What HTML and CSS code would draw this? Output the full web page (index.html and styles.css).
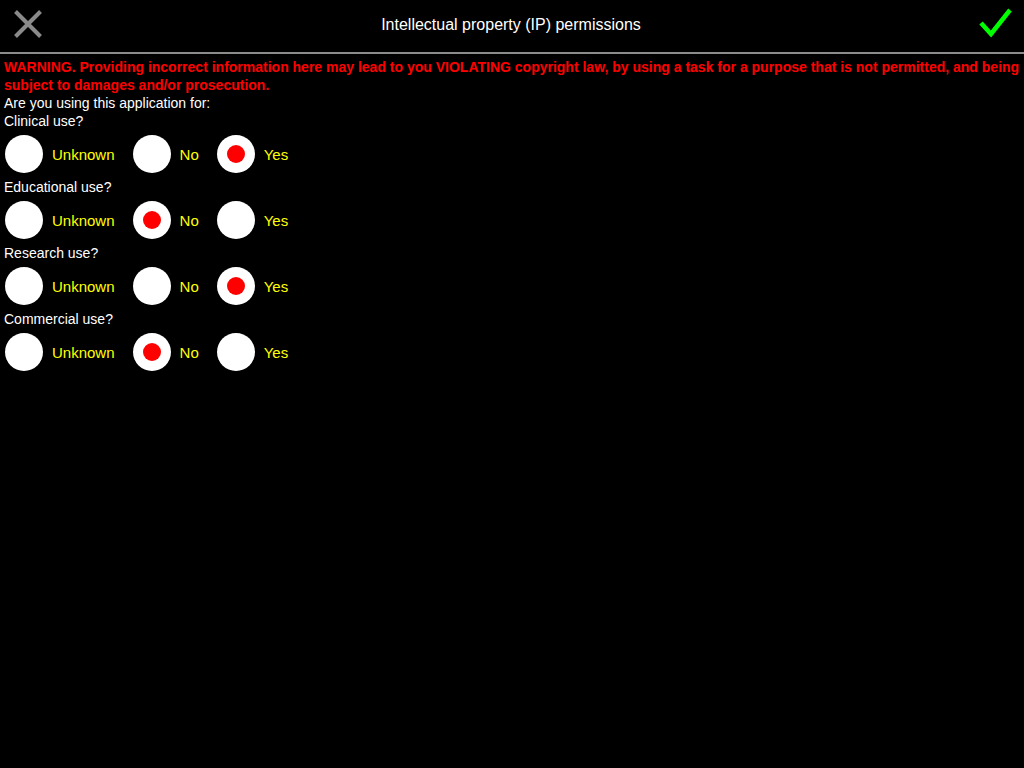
FILE: index.html
```html
<!DOCTYPE html>
<html>
<head>
<meta charset="utf-8">
<link rel="stylesheet" href="styles.css">
</head>
<body>
<header class="topbar">
  <button class="icon-btn cancel" aria-label="Cancel">
    <svg width="28" height="28" viewBox="0 0 28 28"><path d="M1.5 1.5 L26.5 26.5 M26.5 1.5 L1.5 26.5" stroke="#8a8a8a" stroke-width="4" fill="none"/></svg>
  </button>
  <div class="title">Intellectual property (IP) permissions</div>
  <button class="icon-btn ok" aria-label="OK">
    <svg width="36" height="32" viewBox="0 0 36 32"><path d="M3 15 L13 26 L32 2" stroke="#00ff00" stroke-width="4.5" fill="none" stroke-linejoin="miter"/></svg>
  </button>
</header>
<main class="content">
  <p class="warning">WARNING. Providing incorrect information here may lead to you VIOLATING copyright law, by using a task for a purpose that is not permitted, and being subject to damages and/or prosecution.</p>
  <p class="text">Are you using this application for:</p>

  <p class="text">Clinical use?</p>
  <div class="options">
    <div class="opt"><span class="radio"></span><span class="lbl">Unknown</span></div>
    <div class="opt"><span class="radio"></span><span class="lbl">No</span></div>
    <div class="opt"><span class="radio on"></span><span class="lbl">Yes</span></div>
  </div>

  <p class="text">Educational use?</p>
  <div class="options">
    <div class="opt"><span class="radio"></span><span class="lbl">Unknown</span></div>
    <div class="opt"><span class="radio on"></span><span class="lbl">No</span></div>
    <div class="opt"><span class="radio"></span><span class="lbl">Yes</span></div>
  </div>

  <p class="text">Research use?</p>
  <div class="options">
    <div class="opt"><span class="radio"></span><span class="lbl">Unknown</span></div>
    <div class="opt"><span class="radio"></span><span class="lbl">No</span></div>
    <div class="opt"><span class="radio on"></span><span class="lbl">Yes</span></div>
  </div>

  <p class="text">Commercial use?</p>
  <div class="options">
    <div class="opt"><span class="radio"></span><span class="lbl">Unknown</span></div>
    <div class="opt"><span class="radio on"></span><span class="lbl">No</span></div>
    <div class="opt"><span class="radio"></span><span class="lbl">Yes</span></div>
  </div>
</main>
</body>
</html>
```
FILE: styles.css
```css
html, body {
  margin: 0;
  padding: 0;
  background: #000;
  font-family: "Liberation Sans", Arial, sans-serif;
  color: #fff;
}
.topbar {
  height: 52px;
  border-bottom: 2px solid #8c8c8c;
  display: flex;
  align-items: center;
  justify-content: space-between;
  padding: 0 10px 0 14px;
}
.icon-btn {
  background: none;
  border: 0;
  padding: 0;
  display: flex;
  cursor: pointer;
}
.icon-btn.cancel { margin-top: -5px; }
.icon-btn.ok { margin-top: -4px; margin-left: -2px; }
.title {
  font-size: 16px;
  color: #fff;
  flex: 1;
  text-align: center;
  margin-top: -2px;
}
.content {
  padding: 4px 3px 0 4px;
}
p { margin: 0; }
.warning {
  color: #ff0000;
  font-weight: bold;
  font-size: 14px;
  line-height: 18px;
}
.text {
  font-size: 14px;
  line-height: 18px;
  color: #fff;
}
.options {
  display: flex;
  align-items: center;
  height: 48px;
  gap: 18px;
  padding-left: 1px;
}
.opt {
  display: flex;
  align-items: center;
  gap: 9px;
}
.radio {
  width: 38px;
  height: 38px;
  border-radius: 50%;
  background: #fff;
  display: flex;
  align-items: center;
  justify-content: center;
}
.radio.on::after {
  content: "";
  width: 18px;
  height: 18px;
  border-radius: 50%;
  background: #ff0000;
}
.lbl {
  color: #ffff00;
  font-size: 15px;
}
```
